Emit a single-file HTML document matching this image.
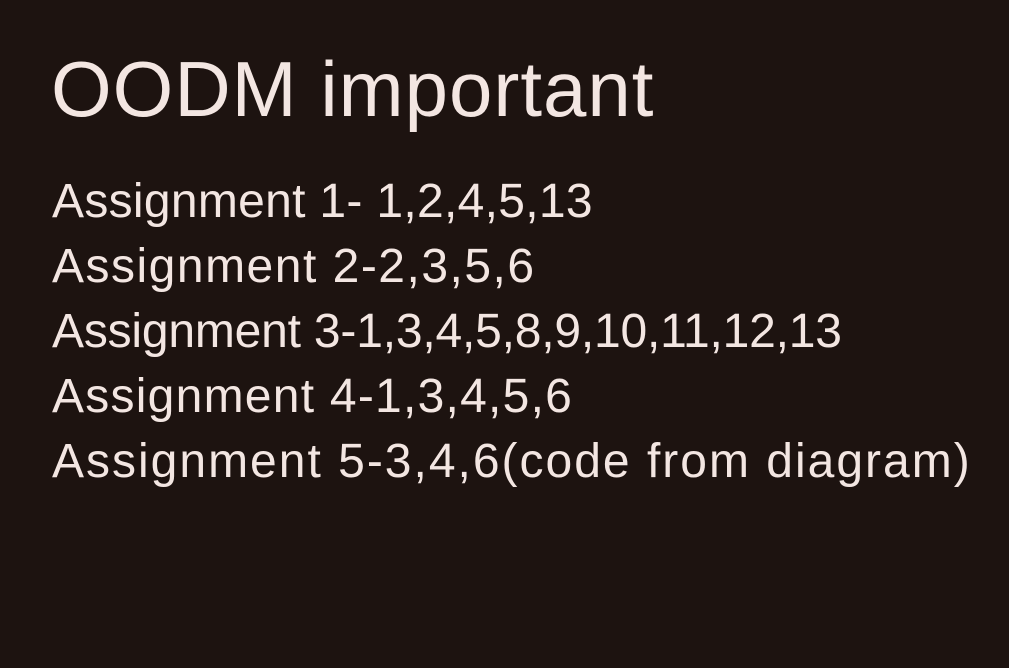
<!DOCTYPE html>
<html><head><meta charset="utf-8"><style>
html,body{margin:0;padding:0;width:1009px;height:668px;background:#1d1310;overflow:hidden}
body{font-family:"Liberation Sans",sans-serif;color:#f3e6e2;position:relative}
.t{position:absolute;left:51px;top:44px;font-size:78px;line-height:90px;white-space:nowrap;letter-spacing:1px}
.l{position:absolute;left:52px;font-size:48px;line-height:60px;white-space:nowrap;letter-spacing:2px}
</style></head><body>
<div class="t">OODM important</div>
<div class="l" style="top:172px;letter-spacing:0.3px">Assignment 1- 1,2,4,5,13</div>
<div class="l" style="top:237px;letter-spacing:1.5px">Assignment 2-2,3,5,6</div>
<div class="l" style="top:302px;letter-spacing:-0.2px">Assignment 3-1,3,4,5,8,9,10,11,12,13</div>
<div class="l" style="top:367px;letter-spacing:1.25px">Assignment 4-1,3,4,5,6</div>
<div class="l" style="top:432px">Assignment 5-3,4,6(code from diagram)</div>
</body></html>
